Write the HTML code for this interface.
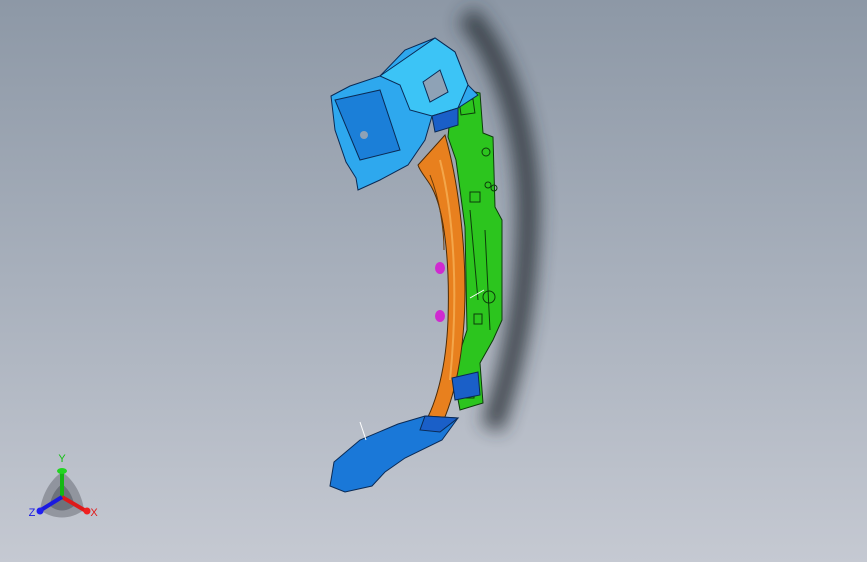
<!DOCTYPE html>
<html><head><style>
html,body{margin:0;padding:0;}
body{width:867px;height:562px;overflow:hidden;background:linear-gradient(180deg,#8d98a6 0%,#a8b0bc 50%,#c5c9d2 100%);}
svg{position:absolute;left:0;top:0;}
</style></head><body>
<svg width="867" height="562" viewBox="0 0 867 562" xmlns="http://www.w3.org/2000/svg">
<defs>
<filter id="b" x="-50%" y="-50%" width="200%" height="200%"><feGaussianBlur stdDeviation="9"/></filter>
</defs>
<!-- shadow -->
<path d="M466,15 C500,50 530,130 528,220 C526,300 515,360 492,428" stroke="#2a3038" stroke-width="22" fill="none" filter="url(#b)" opacity="0.85"/>
<!-- green panel -->
<polygon points="453,87 480,93 483,133 493,137 495,207 502,220 502,320 493,340 480,363 483,403 460,410 453,373 467,330 465,227 456,160 448,137" fill="#2cc51e" stroke="#0c3c0a" stroke-width="1"/>
<g fill="none" stroke="#0c3c0a" stroke-width="1">
<rect x="460" y="100" width="14" height="14" transform="rotate(-8 467 107)"/>
<circle cx="486" cy="152" r="4"/><circle cx="488" cy="185" r="3"/><circle cx="494" cy="188" r="3"/>
<rect x="470" y="192" width="10" height="10"/>
<circle cx="489" cy="297" r="6"/><rect x="474" y="314" width="8" height="10"/>
<rect x="460" y="380" width="14" height="18"/>
<path d="M470,210 L478,300 M485,230 L490,330"/>
</g>
<!-- orange arc -->
<path d="M445,135 C458,180 465,240 465,290 C465,350 455,400 438,432 L420,430 C435,410 446,370 448,320 C450,260 444,210 432,188 C428,180 420,172 418,165 Z" fill="#e8801e" stroke="#4a2a08" stroke-width="1"/>
<path d="M440,160 C455,220 458,300 450,380" stroke="#f3a64a" stroke-width="2" fill="none"/>
<path d="M430,175 C440,200 444,230 444,250" stroke="#6a3a08" stroke-width="1" fill="none"/>
<!-- magenta clips -->
<ellipse cx="440" cy="268" rx="5" ry="6" fill="#d02ad0"/>
<ellipse cx="440" cy="316" rx="5" ry="6" fill="#d02ad0"/>
<!-- top blue -->
<polygon points="331,96 350,86 380,76 405,50 435,38 455,52 468,85 478,95 458,108 432,116 425,140 408,165 380,180 358,190 356,178 346,162 335,130" fill="#2ea8ee" stroke="#0a2a55" stroke-width="1"/>
<polygon points="380,76 435,38 455,52 468,85 458,108 432,116 410,110 400,85" fill="#3cc4f6" stroke="#0a2a55" stroke-width="1"/>
<polygon points="423,82 440,70 448,92 430,102" fill="#8ea2b6" stroke="#0a2a55"/>
<polygon points="335,100 380,90 400,150 360,160" fill="#1b7fd8" stroke="#0a2a55"/>
<polygon points="432,116 458,108 458,125 435,132" fill="#1a5fc8" stroke="#0a2a55"/>
<circle cx="364" cy="135" r="4" fill="#8ea2b6"/>
<!-- bottom blue -->
<polygon points="330,486 334,462 360,440 398,424 425,416 458,418 442,440 405,458 385,472 372,486 345,492" fill="#1a78d8" stroke="#0a2a55" stroke-width="1"/>
<polygon points="425,416 458,418 440,432 420,430" fill="#1a5fc8" stroke="#0a2a55"/>
<polygon points="452,378 478,372 480,395 455,400" fill="#1a5fc8" stroke="#0a2a55"/>
<line x1="360" y1="422" x2="366" y2="440" stroke="#fff" stroke-width="1"/>
<line x1="470" y1="298" x2="484" y2="290" stroke="#fff" stroke-width="1"/>
<!-- triad -->
<path d="M62,472 C74,480 82,495 84,510 C70,520 54,520 40,510 C42,495 50,480 62,472 Z" fill="#6b7079" opacity="0.55"/>
<path d="M62,484 C70,490 74,500 74,506 C66,512 58,512 50,506 C50,500 54,490 62,484 Z" fill="#4a4f57" opacity="0.5"/>
<line x1="62" y1="497" x2="62" y2="472" stroke="#14b814" stroke-width="4"/>
<ellipse cx="62" cy="471" rx="5" ry="3" fill="#22d422"/>
<line x1="62" y1="497" x2="86" y2="511" stroke="#dd1a1a" stroke-width="4"/>
<circle cx="87" cy="511" r="3.5" fill="#f02020"/>
<line x1="62" y1="497" x2="41" y2="510" stroke="#1a1ae0" stroke-width="4"/>
<circle cx="40" cy="511" r="3.5" fill="#2020f0"/>
<text x="62" y="462" font-family="Liberation Sans, sans-serif" font-size="11" fill="#10c010" text-anchor="middle">Y</text>
<text x="94" y="516" font-family="Liberation Sans, sans-serif" font-size="11" fill="#e01a1a" text-anchor="middle">X</text>
<text x="32" y="516" font-family="Liberation Sans, sans-serif" font-size="11" fill="#1a1ae0" text-anchor="middle">Z</text>
</svg>
</body></html>
